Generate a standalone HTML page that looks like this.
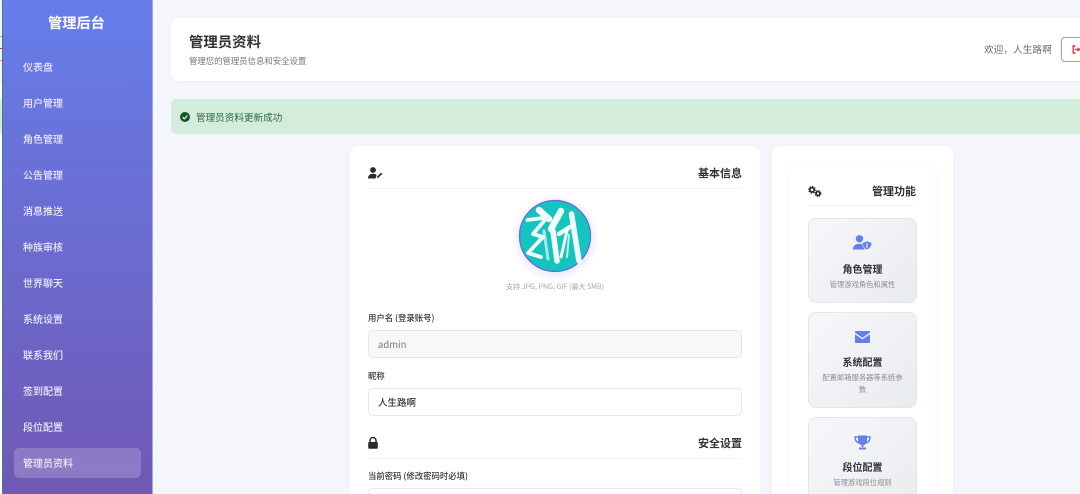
<!DOCTYPE html>
<html lang="zh-CN"><head><meta charset="utf-8"><title>管理员资料</title>
<style>
*{box-sizing:border-box;margin:0;padding:0}
html,body{width:1080px;height:494px;overflow:hidden;background:#f5f6fb}
body{font-family:"Noto Sans CJK SC","Liberation Sans",sans-serif;color:#333;position:relative}
#w{position:absolute;inset:0;filter:blur(.35px);overflow:hidden}
.a{position:absolute;white-space:nowrap}
.side{position:absolute;left:3px;top:0;width:150px;height:494px;background:linear-gradient(180deg,#667eea,#7058b4);border-right:1px solid #a9a3dc}
.nav{position:absolute;left:23px;font-size:10px;font-weight:500;line-height:14px;color:#ebe9fa;white-space:nowrap}
.card{position:absolute;background:#fff;border-radius:8px;box-shadow:0 1px 5px rgba(90,100,140,.05)}
.h{position:absolute;font-size:11px;font-weight:700;line-height:16px;color:#333;text-align:right}
.line{position:absolute;height:1px;background:#f2f3f6}
.lb{position:absolute;font-size:8.4px;font-weight:500;line-height:12px;color:#333;white-space:nowrap}
.inp{position:absolute;left:368px;width:374px;height:28px;border:1px solid #e6e7ea;border-radius:5px;background:#fff;font-size:9.5px;line-height:26px;padding-left:9px}
.tile{position:absolute;left:808px;width:109px;border:1px solid #e4e6ea;border-radius:8px;background:linear-gradient(135deg,#f6f7f9,#e9ecef);text-align:center}
.tt{position:absolute;left:0;right:0;font-size:10px;font-weight:700;line-height:14px;color:#333}
.td{position:absolute;left:13px;right:13px;font-size:7.3px;line-height:12px;color:#8a8f96}
</style></head><body><div id="w">
<div class="a" style="left:0;top:0;width:3px;height:494px;background:#fff"></div>
<div class="a" style="left:0;top:0;width:3px;height:82px;background:#f2f4f3"></div>
<div class="a" style="left:0;top:36px;width:3px;height:1px;background:#e88"></div>
<div class="a" style="left:0;top:48px;width:3px;height:1px;background:#e33"></div>
<div class="a" style="left:0;top:60px;width:3px;height:1px;background:#e88"></div>
<div class="a" style="left:0;top:99px;width:3px;height:35px;background:#d5ebdc"></div>
<div class="a" style="left:2px;top:0;width:1px;height:494px;background:#3f7d80"></div>
<div class="side"></div>
<div class="a" style="left:48px;top:13px;font-size:14.2px;line-height:20px;font-weight:700;color:#fff">管理后台</div>
<div class="nav" style="top:60px">仪表盘</div>
<div class="nav" style="top:96px">用户管理</div>
<div class="nav" style="top:132px">角色管理</div>
<div class="nav" style="top:168px">公告管理</div>
<div class="nav" style="top:204px">消息推送</div>
<div class="nav" style="top:240px">种族审核</div>
<div class="nav" style="top:276px">世界聊天</div>
<div class="nav" style="top:312px">系统设置</div>
<div class="nav" style="top:348px">联系我们</div>
<div class="nav" style="top:384px">签到配置</div>
<div class="nav" style="top:419.500px">段位配置</div>
<div class="a" style="left:14px;top:448px;width:127px;height:30px;background:rgba(255,255,255,.2);border-radius:5px"></div>
<div class="nav" style="top:456px">管理员资料</div>

<div class="card" style="left:170.500px;top:18px;width:930px;height:63px"></div>
<div class="a" style="left:189px;top:31px;font-size:14.4px;line-height:21px;font-weight:700;color:#333">管理员资料</div>
<div class="a" style="left:189px;top:55px;font-size:8.4px;line-height:13px;color:#777">管理您的管理员信息和安全设置</div>
<div class="a" style="left:984px;top:42px;font-size:9.7px;line-height:14px;color:#666d78">欢迎，人生路啊</div>
<div class="a" style="left:1061px;top:37px;width:40px;height:25px;border:1px solid #e08a94;border-radius:4px;background:#fff"></div>
<svg class="a" style="left:1072px;top:45px" width="9" height="9" viewBox="0 0 9 9"><path d="M3.500 1H1.200v7h2.300M3 4.500h4" fill="none" stroke="#dc3545" stroke-width="1.400"/><path d="M5.600 2.200 8.600 4.500 5.600 6.800z" fill="#dc3545"/></svg>

<div class="a" style="left:170.500px;top:99px;width:930px;height:35px;background:#d4ecdc;border-radius:5px"></div>
<svg class="a" style="left:180px;top:112px" width="10" height="10" viewBox="0 0 10 10"><circle cx="5" cy="5" r="5" fill="#155724"/><path d="M2.600 5.100 4.300 6.800 7.400 3.600" fill="none" stroke="#d4ecdc" stroke-width="1.300"/></svg>
<div class="a" style="left:196px;top:110px;font-size:9.6px;line-height:14px;color:#2a6a3c">管理员资料更新成功</div>

<div class="card" style="left:350px;top:146px;width:410px;height:370px"></div>
<svg class="a" style="left:368px;top:167px" width="15" height="12" viewBox="0 0 15 12"><circle cx="5" cy="3" r="2.900" fill="#2b2b2b"/><path d="M0 11.500c0-3.200 2-4.800 5-4.800 1.500 0 2.700.4 3.600 1.200L7.500 11.500z" fill="#2b2b2b"/><path d="M9.300 10.500 13.800 6.200" stroke="#2b2b2b" stroke-width="1.700" fill="none"/></svg>
<div class="h" style="left:642px;width:100px;top:164.500px">基本信息</div>
<div class="line" style="left:368px;top:187.500px;width:374px"></div>

<svg class="a" style="left:514px;top:195px;overflow:visible" width="82" height="82" viewBox="0 0 82 82">
<defs><radialGradient id="g"><stop offset=".78" stop-color="#6a6ae8" stop-opacity=".13"/><stop offset="1" stop-color="#6a6ae8" stop-opacity="0"/></radialGradient></defs>
<circle cx="41" cy="43" r="44" fill="url(#g)"/>
<circle cx="41" cy="41" r="35.500" fill="#14c4bd" stroke="#6a66e6" stroke-width="1.300"/>
<g fill="none" stroke="#f2fdfc" stroke-linecap="round" stroke-linejoin="round">
<path d="M13.500 25 33 22.500 19 39 29 42 14 58 27 62" stroke-width="3.800"/>
<path d="M25 15 35 24" stroke-width="6.500"/>
<path d="M47 16 37 34" stroke-width="6.500"/>
<path d="M30 36 34 64" stroke-width="3" opacity=".65"/>
<path d="M39 36 43 66" stroke-width="5.500"/>
<path d="M45 39 56 32" stroke-width="4.500"/>
<path d="M53 36 47 62" stroke-width="3"/>
<path d="M57.500 19 65 66" stroke-width="5.500"/>
<path d="M55 40 53 62" stroke-width="2" opacity=".8"/>
</g></svg>
<div class="a" style="left:506px;top:282px;font-size:7.1px;line-height:11px;color:#a4a7ab">支持 JPG, PNG, GIF (最大 5MB)</div>

<div class="lb" style="left:368px;top:312px">用户名 (登录账号)</div>
<div class="inp" style="top:330px;background:#f8f8f8;color:#777">admin</div>
<div class="lb" style="left:368px;top:370px">昵称</div>
<div class="inp" style="top:388px;color:#333;font-weight:500">人生路啊</div>
<svg class="a" style="left:368px;top:437px" width="10" height="12" viewBox="0 0 10 12"><path d="M2 5.500V3.500a3 3 0 0 1 6 0v2" fill="none" stroke="#2b2b2b" stroke-width="1.500"/><rect x=".2" y="5" width="9.600" height="6.800" rx="1" fill="#2b2b2b"/></svg>
<div class="h" style="left:642px;width:100px;top:434.500px">安全设置</div>
<div class="line" style="left:368px;top:457.500px;width:374px"></div>
<div class="lb" style="left:368px;top:470px">当前密码 (修改密码时必填)</div>
<div class="inp" style="top:488px;height:28px"></div>

<div class="card" style="left:772px;top:146px;width:181px;height:370px"></div>
<div class="card" style="left:790px;top:164px;width:145px;height:350px;box-shadow:0 0 6px rgba(90,100,140,.05)"></div>
<svg class="a" style="left:808px;top:186px" width="14" height="11" viewBox="0 0 14 11"><circle cx="4" cy="3.800" r="2.200" fill="none" stroke="#2b2b2b" stroke-width="1.700"/><circle cx="4" cy="3.800" r="3.300" fill="none" stroke="#2b2b2b" stroke-width="1.200" stroke-dasharray="1.300 1.300"/><circle cx="10" cy="7.500" r="1.900" fill="none" stroke="#2b2b2b" stroke-width="1.600"/><circle cx="10" cy="7.500" r="3" fill="none" stroke="#2b2b2b" stroke-width="1.100" stroke-dasharray="1.200 1.150"/></svg>
<div class="h" style="left:816px;width:100px;top:183px">管理功能</div>
<div class="line" style="left:808px;top:205px;width:109px"></div>

<div class="tile" style="top:218px;height:85px"><div class="tt" style="top:42.500px">角色管理</div><div class="td" style="top:60px;left:0;right:0">管理游戏角色和属性</div></div>
<svg class="a" style="left:853px;top:235px" width="19" height="15" viewBox="0 0 19 15"><circle cx="6.500" cy="3.800" r="3.700" fill="#667eea"/><path d="M0 14.500c0-3.800 2.500-5.800 6-5.800 1.500 0 2.800.3 3.800 1 .3 2 1 3.600 2.300 4.800z" fill="#667eea"/><path d="M14 6 18.800 7.800c0 3.600-1.500 5.800-4.800 7C10.700 13.600 9.200 11.400 9.200 7.800z" fill="#667eea" stroke="#eef0f4" stroke-width=".6"/><path d="M14 8v5" stroke="#dfe3f6" stroke-width="1.200" fill="none"/></svg>

<div class="tile" style="top:312px;height:96px"><div class="tt" style="top:41.500px">系统配置</div><div class="td" style="top:59px">配置邮箱服务器等系统参数</div></div>
<svg class="a" style="left:855px;top:331px" width="15" height="12" viewBox="0 0 15 12"><path d="M1 0h13a1 1 0 0 1 1 1v.600L7.500 6.800 0 1.600V1a1 1 0 0 1 1-1z" fill="#667eea"/><path d="M0 3.200 7.500 8.400 15 3.200V11a1 1 0 0 1-1 1H1a1 1 0 0 1-1-1z" fill="#667eea"/></svg>

<div class="tile" style="top:417px;height:95px"><div class="tt" style="top:41.500px">段位配置</div><div class="td" style="top:59px;left:0;right:0">管理游戏段位规则</div></div>
<svg class="a" style="left:854px;top:435px" width="17" height="15" viewBox="0 0 17 15"><path d="M4 .500h9V6c0 2.500-1.800 4-4.500 4S4 8.500 4 6z" fill="#667eea"/><path d="M3.800 2H1c0 3.500 1.400 5.300 4 6M13.200 2H16c0 3.500-1.400 5.300-4 6" fill="none" stroke="#667eea" stroke-width="1.400"/><path d="M7.500 9.500h2v2.500h-2zM5 12.500h7V14.500H5z" fill="#667eea"/></svg>
</div></body></html>
